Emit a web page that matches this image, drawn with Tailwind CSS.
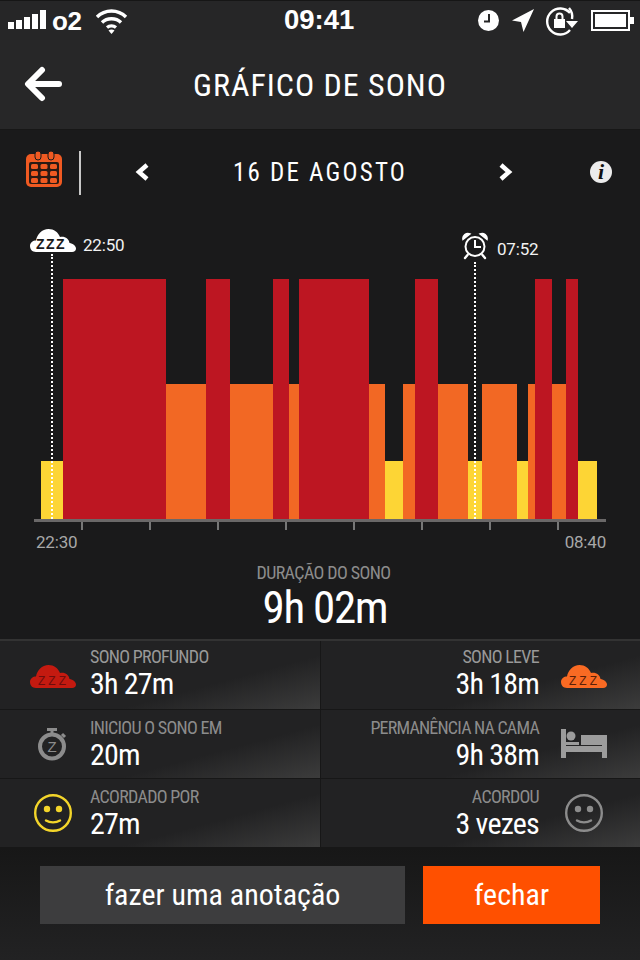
<!DOCTYPE html>
<html lang="pt">
<head>
<meta charset="utf-8">
<script src="https://cdn.jsdelivr.net/npm/@tailwindcss/browser@4"></script>
<title>Gráfico de sono</title>
</head>
<body class="m-0 bg-[#1a1a1b]">
<div class="w-[640px] h-[960px] overflow-hidden flex flex-col bg-[#1a1a1b] text-white font-['Roboto',sans-serif]">

  <!-- status bar -->
  <div class="relative h-[40px] shrink-0 flex items-center justify-between bg-[#262627] border-t border-[#161616]">
    <div class="flex items-center pl-[8px]">
      <svg width="40" height="24" viewBox="0 0 40 24" fill="#fff"><rect x="0" y="13" width="6" height="7"/><rect x="8" y="11" width="6" height="9"/><rect x="16" y="8" width="6" height="12"/><rect x="24" y="5" width="6" height="15"/><rect x="32" y="1" width="6" height="19"/></svg>
      <span class="ml-[4px] font-['Liberation_Sans',sans-serif] font-bold text-[26px] leading-none tracking-[-0.5px]">o2</span>
      <svg class="ml-[14px]" width="33" height="26" viewBox="0 0 33 26" fill="none" stroke="#fff" stroke-width="3.4"><path d="M2 9C10 1 23 1 31 9"/><path d="M7 14.500C12 9.500 21 9.500 26 14.500"/><path d="M12 19.500C14.500 17.500 18.500 17.500 21 19.500"/><path d="M16.500 26L13.500 22.500C15 21 18 21 19.500 22.500Z" fill="#fff" stroke="none"/></svg>
    </div>
    <span class="absolute left-[284px] top-[4px] font-['Liberation_Sans',sans-serif] font-bold text-[27.500px] leading-[30px]">09:41</span>
    <div class="flex items-center pr-[5px]">
      <svg width="23" height="23" viewBox="0 0 23 23"><circle cx="11.500" cy="11.500" r="10.500" fill="#fff"/><path d="M12 5V12.500H7" fill="none" stroke="#262627" stroke-width="2"/></svg>
      <svg class="ml-[11px]" width="24" height="25" viewBox="0 0 24 25" fill="#fff"><path d="M23 1L1 12.500L10 14L12.500 24Z"/></svg>
      <svg class="ml-[9px]" width="36" height="32" viewBox="0 0 36 32" fill="none"><path d="M26 8A13 13 0 1 0 26 25" stroke="#fff" stroke-width="2.400"/><path d="M25 3A13 13 0 0 1 28 14" stroke="#fff" stroke-width="2.400"/><path d="M22 16H34L28 23Z" fill="#fff"/><path d="M10 14H21V23H10Z" fill="#fff"/><path d="M12.500 14V11.500A3 3 0 0 1 18.500 11.500V14" stroke="#fff" stroke-width="2"/></svg>
      <svg class="ml-[11px]" width="44" height="22" viewBox="0 0 44 22"><rect x="1" y="1" width="37" height="19" fill="none" stroke="#fff" stroke-width="2"/><rect x="4" y="4" width="31" height="13" fill="#fff"/><rect x="39" y="7" width="4" height="7" fill="#fff"/></svg>
    </div>
  </div>

  <!-- nav -->
  <div class="relative h-[90px] shrink-0 flex items-center justify-center bg-[#272728] border-b border-[#171717]">
    <svg class="absolute left-[24px] top-[26px]" width="38" height="36" viewBox="0 0 38 36" fill="none" stroke="#fff" stroke-width="6" stroke-linecap="round" stroke-linejoin="round"><path d="M35 18H5"/><path d="M18 4L4 18L18 32"/></svg>
    <span class="text-[32px] leading-none tracking-[1px] [font-stretch:75%]">GRÁFICO DE SONO</span>
  </div>

  <!-- date row -->
  <div class="relative h-[84px] shrink-0 flex items-center justify-center">
    <svg class="absolute left-[25px] top-[20px]" width="38" height="38" viewBox="0 0 38 38"><rect x="1" y="4" width="36" height="33" rx="5" fill="#f05a22"/><rect x="4" y="12" width="30" height="22" rx="2" fill="#2a1a14"/><g fill="#f05a22"><rect x="6" y="14" width="7" height="5" rx="1.500"/><rect x="15.500" y="14" width="7" height="5" rx="1.500"/><rect x="25" y="14" width="7" height="5" rx="1.500"/><rect x="6" y="21" width="7" height="5" rx="1.500"/><rect x="15.500" y="21" width="7" height="5" rx="1.500"/><rect x="25" y="21" width="7" height="5" rx="1.500"/><rect x="6" y="28" width="7" height="5" rx="1.500"/><rect x="15.500" y="28" width="7" height="5" rx="1.500"/><rect x="25" y="28" width="7" height="5" rx="1.500"/></g><rect x="10" y="1" width="6" height="9" rx="3" fill="#f05a22" stroke="#1a1a1b" stroke-width="1"/><rect x="23" y="1" width="6" height="9" rx="3" fill="#f05a22" stroke="#1a1a1b" stroke-width="1"/></svg>
    <div class="absolute left-[79px] top-[21px] w-[2px] h-[44px] bg-[#c8c8c8]"></div>
    <svg class="absolute left-[134px] top-[33px]" width="16" height="18" viewBox="0 0 16 18" fill="none" stroke="#fff" stroke-width="4.500"><path d="M13 2L5 9L13 16"/></svg>
    <span class="text-[25px] leading-none tracking-[2.200px] [font-stretch:75%]">16 DE AGOSTO</span>
    <svg class="absolute left-[498px] top-[33px]" width="16" height="18" viewBox="0 0 16 18" fill="none" stroke="#fff" stroke-width="4.500"><path d="M3 2L11 9L3 16"/></svg>
    <div class="absolute left-[590px] top-[31px] w-[22px] h-[22px] rounded-full bg-[#ececec] flex items-center justify-center font-['Liberation_Serif',serif] italic font-bold text-[22px] leading-none text-[#111]">i</div>
  </div>

  <!-- chart -->
  <div class="relative h-[65px] shrink-0">
    <svg class="absolute left-[30px] top-[13px]" width="46" height="26" viewBox="0 0 46 26"><path d="M6 25C2 25 0 22 0 19C0 15.500 3 13.500 6 13.500C7 7.500 12 2 18.500 2C24 2 28 5 30 10C35 9 39 12 39.500 16C43 16.500 46 19 46 21.500C46 23.500 44.500 25 42 25Z" fill="#fff"/><text x="6" y="22" font-family="'Liberation Sans',sans-serif" font-weight="700" font-size="14" letter-spacing="1.500" fill="#1a1a1b">ZZZ</text></svg>
    <span class="absolute left-[83px] top-[20px] text-[17px] leading-[22px] tracking-[-0.2px] text-[#f2f2f2]">22:50</span>
    <svg class="absolute left-[462px] top-[18px]" width="26" height="28" viewBox="0 0 26 28" fill="none" stroke="#fff"><circle cx="13" cy="14.500" r="9.500" stroke-width="2"/><path d="M13 8V15H19" stroke-width="2"/><path d="M1 7.500A5 5 0 0 1 8 2L1 7.500Z" fill="#fff" stroke-width="1.500"/><path d="M25 7.500A5 5 0 0 0 18 2L25 7.500Z" fill="#fff" stroke-width="1.500"/><path d="M3 26L5.500 23M23 26L20.500 23" stroke-width="2.400" stroke-linecap="round"/></svg>
    <span class="absolute left-[497px] top-[24px] text-[17px] leading-[22px] tracking-[-0.2px] text-[#f2f2f2]">07:52</span>
  </div>
  <div class="relative h-[240px] shrink-0 pl-[41px] flex items-end">
    <div class="w-[22px] h-[58px] bg-[#fdd535]"></div>
    <div class="w-[103px] h-[240px] bg-[#bd1622]"></div>
    <div class="w-[40px] h-[135px] bg-[#f26824]"></div>
    <div class="w-[24px] h-[240px] bg-[#bd1622]"></div>
    <div class="w-[43px] h-[135px] bg-[#f26824]"></div>
    <div class="w-[16px] h-[240px] bg-[#bd1622]"></div>
    <div class="w-[10px] h-[135px] bg-[#f26824]"></div>
    <div class="w-[70px] h-[240px] bg-[#bd1622]"></div>
    <div class="w-[16px] h-[135px] bg-[#f26824]"></div>
    <div class="w-[18px] h-[58px] bg-[#fdd535]"></div>
    <div class="w-[12px] h-[135px] bg-[#f26824]"></div>
    <div class="w-[23px] h-[240px] bg-[#bd1622]"></div>
    <div class="w-[30px] h-[135px] bg-[#f26824]"></div>
    <div class="w-[14px] h-[58px] bg-[#fdd535]"></div>
    <div class="w-[35px] h-[135px] bg-[#f26824]"></div>
    <div class="w-[11px] h-[58px] bg-[#fdd535]"></div>
    <div class="w-[7px] h-[135px] bg-[#f26824]"></div>
    <div class="w-[17px] h-[240px] bg-[#bd1622]"></div>
    <div class="w-[14px] h-[135px] bg-[#f26824]"></div>
    <div class="w-[12px] h-[240px] bg-[#bd1622]"></div>
    <div class="w-[19px] h-[58px] bg-[#fdd535]"></div>
    <div class="absolute left-[51px] top-[-25px] bottom-0 w-0 border-l-2 border-dotted border-white"></div>
    <div class="absolute left-[474px] top-[-17px] bottom-0 w-0 border-l-2 border-dotted border-white"></div>
  </div>
  <div class="h-[3px] w-[572px] ml-[34px] shrink-0 bg-[#6a6868]"></div>
  <div class="h-[8px] shrink-0 pl-[81px] flex gap-[66px]">
    <div class="w-[2px] bg-[#777]"></div><div class="w-[2px] bg-[#777]"></div><div class="w-[2px] bg-[#777]"></div><div class="w-[2px] bg-[#777]"></div><div class="w-[2px] bg-[#777]"></div><div class="w-[2px] bg-[#777]"></div><div class="w-[2px] bg-[#777]"></div><div class="w-[2px] bg-[#777]"></div>
  </div>
  <div class="h-[26px] shrink-0 pr-[34px] pl-[36px] flex items-center justify-between text-[17px] tracking-[-0.2px] text-[#a8a8a8]">
    <span>22:30</span><span>08:40</span>
  </div>
  <div class="h-[25px] mt-[4px] pl-[7px] shrink-0 flex items-center justify-center text-[18px] leading-none tracking-[-0.6px] [font-stretch:75%] text-[#8c8c8c]">DURAÇÃO DO SONO</div>
  <div class="h-[44px] pl-[10px] shrink-0 flex items-center justify-center text-[45px] leading-none tracking-[-1.300px] [font-stretch:75%]">9h 02m</div>

  <!-- stats -->
  <div class="mt-[10px] shrink-0 border-t-2 border-[#333] grid grid-cols-2 gap-x-px gap-y-px bg-[#171717] pb-px [font-stretch:75%]">
    <div class="h-[68px] flex items-center pl-[30px] bg-[linear-gradient(165deg,#222223_65%,#3c3c3c_100%)]">
      <svg class="mt-[2px]" width="46" height="26" viewBox="0 0 46 26"><path d="M6 25C2 25 0 22 0 19C0 15.500 3 13.500 6 13.500C7 7.500 12 2 18.500 2C24 2 28 5 30 10C35 9 39 12 39.500 16C43 16.500 46 19 46 21.500C46 23.500 44.500 25 42 25Z" fill="#c41a10"/><text x="8" y="22" font-family="'Liberation Sans',sans-serif" font-size="12" letter-spacing="3" fill="#6e0d0d">ZZZ</text></svg>
      <div class="ml-[14px] pb-[5px] flex flex-col items-start"><span class="text-[18px] leading-[22px] tracking-[-0.7px] text-[#999]">SONO PROFUNDO</span><span class="text-[30px] leading-[32px] tracking-[-0.8px]">3h 27m</span></div>
    </div>
    <div class="h-[68px] flex items-center justify-end pr-[33px] bg-[linear-gradient(165deg,#222223_65%,#3c3c3c_100%)]">
      <div class="mr-[22px] pb-[5px] flex flex-col items-end"><span class="text-[18px] leading-[22px] tracking-[-0.7px] text-[#999]">SONO LEVE</span><span class="text-[30px] leading-[32px] tracking-[-0.8px]">3h 18m</span></div>
      <svg class="mt-[2px]" width="46" height="26" viewBox="0 0 46 26"><path d="M6 25C2 25 0 22 0 19C0 15.500 3 13.500 6 13.500C7 7.500 12 2 18.500 2C24 2 28 5 30 10C35 9 39 12 39.500 16C43 16.500 46 19 46 21.500C46 23.500 44.500 25 42 25Z" fill="#f96a23"/><text x="8" y="22" font-family="'Liberation Sans',sans-serif" font-size="12" letter-spacing="3" fill="#5a2008">ZZZ</text></svg>
    </div>
    <div class="h-[68px] flex items-center pl-[37px] bg-[linear-gradient(165deg,#222223_65%,#3c3c3c_100%)]">
      <svg width="30" height="34" viewBox="0 0 30 34" fill="none" stroke="#8c8c8c"><circle cx="15" cy="19.500" r="12" stroke-width="4"/><path d="M10 2.500H20M15 3V7M25 7L28 10" stroke-width="3"/><text x="15" y="25" text-anchor="middle" font-family="'Liberation Sans',sans-serif" font-size="15" fill="#8c8c8c" stroke="none">Z</text></svg>
      <div class="ml-[23px] pb-[1px] flex flex-col items-start"><span class="text-[18px] leading-[22px] tracking-[-0.7px] text-[#8c8c8c]">INICIOU O SONO EM</span><span class="text-[30px] leading-[32px] tracking-[-0.8px]">20m</span></div>
    </div>
    <div class="h-[68px] flex items-center justify-end pr-[33px] bg-[linear-gradient(165deg,#222223_65%,#3c3c3c_100%)]">
      <div class="mr-[22px] pb-[1px] flex flex-col items-end"><span class="text-[18px] leading-[22px] tracking-[-0.8px] text-[#8c8c8c]">PERMANÊNCIA NA CAMA</span><span class="text-[30px] leading-[32px] tracking-[-0.8px]">9h 38m</span></div>
      <svg width="46" height="30" viewBox="0 0 46 30" fill="#9c9c9c"><rect x="0" y="0" width="5" height="29"/><rect x="41" y="6" width="5" height="23"/><rect x="0" y="17" width="46" height="6"/><circle cx="10" cy="7" r="4.500"/><path d="M20 6H41V16H20Z"/><path d="M5 13H18V16H5Z"/></svg>
    </div>
    <div class="h-[68px] flex items-center pl-[34px] bg-[linear-gradient(165deg,#222223_65%,#3c3c3c_100%)]">
      <svg width="38" height="38" viewBox="0 0 38 38" fill="none"><circle cx="19" cy="19" r="17.800" stroke="#f3d52a" stroke-width="2.400"/><circle cx="13" cy="15" r="3.200" fill="#f3d52a"/><circle cx="25" cy="15" r="3.200" fill="#f3d52a"/><path d="M12 26.500C16 29 22 29 26 26.500" stroke="#f3d52a" stroke-width="2.400" stroke-linecap="round"/></svg>
      <div class="ml-[18px] flex flex-col items-start"><span class="text-[18px] leading-[22px] tracking-[-0.7px] text-[#8c8c8c]">ACORDADO POR</span><span class="text-[30px] leading-[32px] tracking-[-0.8px]">27m</span></div>
    </div>
    <div class="h-[68px] flex items-center justify-end pr-[37px] bg-[linear-gradient(165deg,#222223_65%,#3c3c3c_100%)]">
      <div class="mr-[26px] flex flex-col items-end"><span class="text-[18px] leading-[22px] tracking-[-0.7px] text-[#8c8c8c]">ACORDOU</span><span class="text-[30px] leading-[32px] tracking-[-0.8px]">3 vezes</span></div>
      <svg width="38" height="38" viewBox="0 0 38 38" fill="none"><circle cx="19" cy="19" r="17.800" stroke="#8c8c8c" stroke-width="2.400"/><circle cx="13" cy="15" r="3.200" fill="#8c8c8c"/><circle cx="25" cy="15" r="3.200" fill="#8c8c8c"/><path d="M12 26.500C16 29 22 29 26 26.500" stroke="#8c8c8c" stroke-width="2.400" stroke-linecap="round"/></svg>
    </div>
  </div>

  <!-- footer -->
  <div class="flex-1 flex items-start pl-[40px] pt-[18px] gap-[18px] bg-[linear-gradient(180deg,#171717,#222223)] [font-stretch:75%]">
    <div class="w-[365px] h-[58px] flex items-center justify-center bg-[#3d3d3e] text-[30px] leading-none">fazer uma anotação</div>
    <div class="w-[177px] h-[58px] flex items-center justify-center bg-[#ff5000] text-[30px] leading-none">fechar</div>
  </div>
</div>
</body>
</html>
